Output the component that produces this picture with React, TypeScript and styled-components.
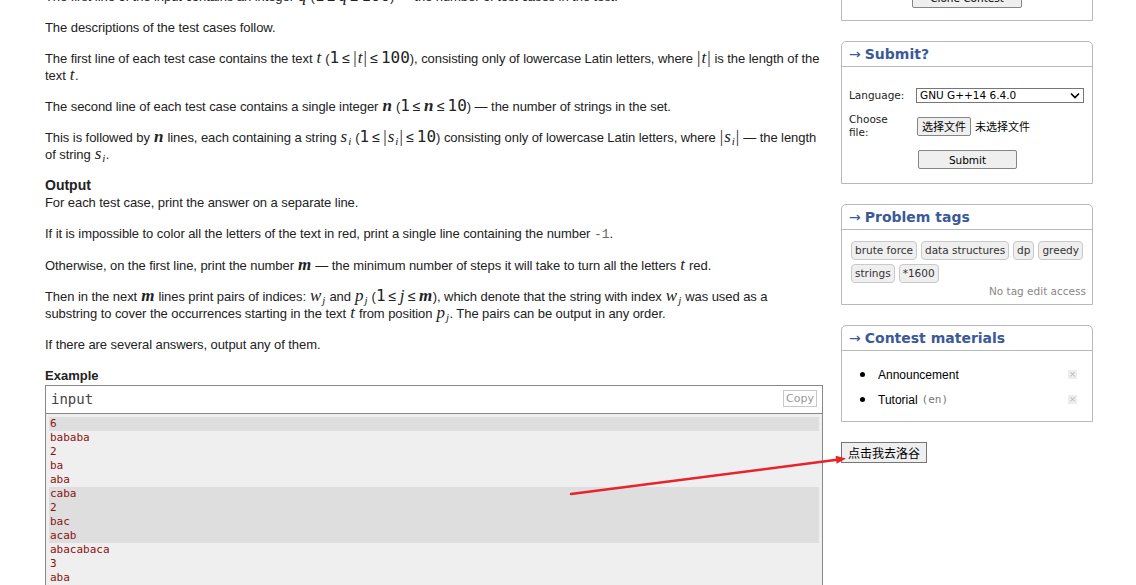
import React from 'react';
import styled, { createGlobalStyle } from 'styled-components';

const GlobalStyle = createGlobalStyle`
  html, body { margin: 0; padding: 0; background: #fff; }
  body { font-family: "Liberation Sans", Arial, sans-serif; overflow: hidden; }
`;

const Page = styled.div`
  position: relative;
  display: flex;
  align-items: flex-start;
  gap: 18px;
  padding-left: 45px;
  width: 1136px;
  height: 585px;
  overflow: hidden;
  box-sizing: border-box;
`;

const Main = styled.div`
  width: 778px;
  flex: none;
  margin-top: -12.5px;
  font-size: 13px;
  line-height: 17px;
  letter-spacing: -0.07px;
  color: #222;
`;

const Para = styled.p<{ $nowrap?: boolean }>`
  margin: 0 0 14px;
  white-space: ${(p) => (p.$nowrap ? 'nowrap' : 'normal')};
`;

const SectionTitle = styled.div<{ $size: number }>`
  font-weight: bold;
  font-size: ${(p) => p.$size}px;
  line-height: 17px;
  letter-spacing: 0;
  color: #222;
`;

const V = styled.span<{ $bold?: boolean }>`
  font-family: "Liberation Serif", "Times New Roman", serif;
  font-style: italic;
  font-size: 17px;
  line-height: 0;
  letter-spacing: 0;
  padding: 0 0.5px;
  font-weight: ${(p) => (p.$bold ? 'bold' : 'normal')};
`;

const Num = styled.span`
  font-family: "DejaVu Sans Mono", monospace;
  font-size: 16px;
  line-height: 0;
  letter-spacing: 0;
`;

const Rel = styled.span`
  font-family: "Liberation Sans", Arial, sans-serif;
  font-size: 14px;
  line-height: 0;
  margin: 0 3px;
`;

const Bar = styled.span`
  font-family: "Liberation Serif", serif;
  font-size: 17px;
  line-height: 0;
  margin: 0 0.5px;
`;

const Sub = styled.sub`
  font-family: "Liberation Serif", serif;
  font-style: italic;
  font-weight: normal;
  font-size: 11px;
  line-height: 0;
  vertical-align: -3px;
  padding-left: 1px;
`;

const Code = styled.span`
  font-family: "Liberation Mono", monospace;
  font-size: 13px;
  letter-spacing: 0;
  color: #666;
`;

const SampleBox = styled.div`
  margin-top: 1px;
  border: 1px solid #888;
  letter-spacing: 0;
`;

const SampleHeader = styled.div`
  height: 27px;
  border-bottom: 1px solid #888;
  display: flex;
  align-items: center;
  justify-content: space-between;
  padding: 0 5px;
  font-family: "DejaVu Sans Mono", monospace;
  font-size: 14px;
  color: #444;
`;

const CopyButton = styled.div`
  height: 15px;
  padding: 0 2px;
  border: 1px solid #c8c8c8;
  font-family: "DejaVu Sans", sans-serif;
  font-size: 11px;
  line-height: 15px;
  color: #999;
  margin-top: -1px;
`;

const SampleBody = styled.div`
  background: #efefef;
  padding: 3px 3px;
  font-family: "DejaVu Sans Mono", monospace;
  font-size: 11px;
  line-height: 14px;
  color: #8b1010;
`;

const SampleLine = styled.div<{ $dark: boolean }>`
  height: 14px;
  padding-left: 1px;
  background: ${(p) => (p.$dark ? '#dedede' : 'transparent')};
`;

const Side = styled.aside`
  width: 252px;
  flex: none;
  display: flex;
  flex-direction: column;
  align-items: flex-start;
  gap: 20px;
  margin-top: -30px;
  font-family: "DejaVu Sans", Verdana, sans-serif;
`;

const Box = styled.section`
  width: 252px;
  box-sizing: border-box;
  border: 1px solid #b9b9b9;
  border-radius: 5px 5px 0 0;
  background: #fff;
`;

const BoxHeader = styled.div`
  height: 24px;
  border-bottom: 1px solid #b9b9b9;
  padding-left: 7px;
  display: flex;
  align-items: center;
  gap: 4px;
  font-weight: bold;
  font-size: 14px;
  color: #3b5998;
`;

const Arrow = styled.span`
  font-weight: normal;
  font-size: 14px;
`;

const CloneBody = styled.div`
  height: 49px;
  box-sizing: border-box;
  padding-bottom: 12px;
  display: flex;
  align-items: flex-end;
  justify-content: center;
`;

const NativeButton = styled.button<{ $w?: number }>`
  height: 20px;
  box-sizing: border-box;
  width: ${(p) => (p.$w ? `${p.$w}px` : 'auto')};
  padding: 0 5px;
  background: #efefef;
  border: 1px solid #858585;
  border-radius: 2px;
  font-family: "DejaVu Sans", "Noto Sans CJK SC", sans-serif;
  font-size: 10.5px;
  color: #000;
  line-height: 18px;
`;

const FormGrid = styled.div`
  display: grid;
  grid-template-columns: 67px 1fr;
  grid-template-rows: 14px 26px 19px;
  row-gap: 11px;
  align-items: center;
  padding: 21px 8px 14px 7px;
  font-size: 10.5px;
  color: #222;
`;

const Label = styled.div`
  line-height: 13px;
`;

const SelectBox = styled.div`
  width: 168px;
  height: 15px;
  box-sizing: border-box;
  border: 1px solid #767676;
  display: flex;
  align-items: center;
  justify-content: space-between;
  padding: 0 3px 0 3px;
  font-size: 10.5px;
  color: #000;
  background: #fff;
`;

const FileRow = styled.div`
  display: flex;
  align-items: center;
  gap: 4px;
  margin-left: 1px;
  font-family: "Noto Sans CJK SC", sans-serif;
  font-size: 11px;
  color: #000;
`;

const FileButton = styled.div`
  height: 19px;
  box-sizing: border-box;
  padding: 0 4px;
  border: 1px solid #858585;
  border-radius: 2px;
  background: #efefef;
  display: flex;
  align-items: center;
  font-size: 11px;
`;

const SubmitCell = styled.div`
  grid-column: 2;
  padding-left: 2px;
`;

const SubmitButton = styled.div`
  width: 99px;
  height: 19px;
  box-sizing: border-box;
  border: 1px solid #858585;
  border-radius: 2px;
  background: #efefef;
  display: flex;
  align-items: center;
  justify-content: center;
  font-size: 10.5px;
  color: #000;
`;

const TagBody = styled.div`
  padding: 11px 6px 6px 9px;
`;

const TagList = styled.div`
  display: flex;
  flex-wrap: wrap;
  gap: 4px;
`;

const Tag = styled.span`
  height: 19px;
  box-sizing: border-box;
  padding: 0 3px;
  border: 1px solid #c9c9c9;
  border-radius: 4px;
  background: #efefef;
  font-size: 10.5px;
  line-height: 17px;
  color: #333;
`;

const NoAccess = styled.div`
  margin-top: 2px;
  text-align: right;
  font-size: 10.5px;
  line-height: 13px;
  color: #888;
`;

const MaterialList = styled.ul`
  list-style: none;
  margin: 0;
  padding: 11px 15px 9px 18px;
`;

const MaterialItem = styled.li`
  height: 25px;
  display: flex;
  align-items: center;
  font-family: "Liberation Sans", Arial, sans-serif;
  font-size: 12px;
  color: #000;
`;

const Bullet = styled.span`
  width: 5px;
  height: 5px;
  border-radius: 50%;
  background: #000;
  margin-right: 13px;
  flex: none;
`;

const Lang = styled.span`
  font-family: "DejaVu Sans Mono", monospace;
  font-size: 11px;
  color: #777;
  margin-left: 4px;
`;

const Spacer = styled.span`
  flex: 1;
`;

const CloseMark = styled.span`
  width: 9px;
  height: 9px;
  background: #eee;
  color: #bbb;
  font-size: 9px;
  line-height: 9px;
  text-align: center;
  font-family: "DejaVu Sans", sans-serif;
`;

const LuoguButton = styled.button`
  height: 21px;
  padding: 0 6px;
  background: #efefef;
  border: 1px solid #767676;
  border-radius: 0;
  font-family: "Noto Sans CJK SC", sans-serif;
  font-size: 12px;
  line-height: 19px;
  color: #000;
`;

const Overlay = styled.svg`
  position: absolute;
  left: 0;
  top: 0;
  pointer-events: none;
`;

const Ineq: React.FC<{ v: React.ReactNode; max: React.ReactNode; abs?: boolean }> = ({ v, max, abs }) => (
  <>
    <Num>1</Num>
    <Rel>≤</Rel>
    {abs && <Bar>|</Bar>}
    {v}
    {abs && <Bar>|</Bar>}
    <Rel>≤</Rel>
    {max}
  </>
);

const sample = [
  '6', 'bababa', '2', 'ba', 'aba', 'caba', '2', 'bac', 'acab', 'abacabaca', '3', 'aba', 'bac', 'aca',
  'baca', '3', 'a', 'c', 'b',
];
const groupOf = (i: number) => {
  if (i === 0) return 0;
  if (i <= 4) return 1;
  if (i <= 8) return 2;
  if (i <= 13) return 3;
  return 4;
};

export default function App() {
  return (
    <>
      <GlobalStyle />
      <Page>
        <Main>
          <Para>
            The first line of the input contains an integer <V>q</V> (<Ineq v={<V>q</V>} max={<Num>100</Num>} />) — the number of test cases in the test.
          </Para>
          <Para>The descriptions of the test cases follow.</Para>
          <Para $nowrap>
            The first line of each test case contains the text <V>t</V> (<Ineq abs v={<V>t</V>} max={<Num>100</Num>} />), consisting only of lowercase Latin letters, where <Bar>|</Bar><V>t</V><Bar>|</Bar> is the length of the
            <br />
            text <V>t</V>.
          </Para>
          <Para>
            The second line of each test case contains a single integer <V $bold>n</V> (<Ineq v={<V $bold>n</V>} max={<Num>10</Num>} />) — the number of strings in the set.
          </Para>
          <Para $nowrap>
            This is followed by <V $bold>n</V> lines, each containing a string <V>s<Sub>i</Sub></V> (<Ineq abs v={<V>s<Sub>i</Sub></V>} max={<Num>10</Num>} />) consisting only of lowercase Latin letters, where <Bar>|</Bar><V>s<Sub>i</Sub></V><Bar>|</Bar> — the length
            <br />
            of string <V>s<Sub>i</Sub></V>.
          </Para>
          <SectionTitle $size={14}>Output</SectionTitle>
          <Para>For each test case, print the answer on a separate line.</Para>
          <Para>
            If it is impossible to color all the letters of the text in red, print a single line containing the number <Code>-1</Code>.
          </Para>
          <Para>
            Otherwise, on the first line, print the number <V $bold>m</V> — the minimum number of steps it will take to turn all the letters <V>t</V> red.
          </Para>
          <Para $nowrap>
            Then in the next <V $bold>m</V> lines print pairs of indices: <V>w<Sub>j</Sub></V> and <V>p<Sub>j</Sub></V> (<Ineq v={<V>j</V>} max={<V $bold>m</V>} />), which denote that the string with index <V>w<Sub>j</Sub></V> was used as a
            <br />
            substring to cover the occurrences starting in the text <V>t</V> from position <V>p<Sub>j</Sub></V>. The pairs can be output in any order.
          </Para>
          <Para>If there are several answers, output any of them.</Para>
          <SectionTitle $size={13}>Example</SectionTitle>
          <SampleBox>
            <SampleHeader>
              <span>input</span>
              <CopyButton>Copy</CopyButton>
            </SampleHeader>
            <SampleBody>
              {sample.map((line, i) => (
                <SampleLine key={i} $dark={groupOf(i) % 2 === 0}>
                  {line}
                </SampleLine>
              ))}
            </SampleBody>
          </SampleBox>
        </Main>
        <Side>
          <Box>
            <CloneBody>
              <NativeButton $w={110}>Clone Contest</NativeButton>
            </CloneBody>
          </Box>
          <Box>
            <BoxHeader>
              <Arrow>→</Arrow>Submit?
            </BoxHeader>
            <FormGrid>
              <Label>Language:</Label>
              <SelectBox>
                <span>GNU G++14 6.4.0</span>
                <svg width="10" height="7" viewBox="0 0 10 7">
                  <path d="M1 1.5 L5 5.5 L9 1.5" fill="none" stroke="#000" strokeWidth="1.6" />
                </svg>
              </SelectBox>
              <Label>
                Choose
                <br />
                file:
              </Label>
              <FileRow>
                <FileButton>选择文件</FileButton>
                <span>未选择文件</span>
              </FileRow>
              <SubmitCell>
                <SubmitButton>Submit</SubmitButton>
              </SubmitCell>
            </FormGrid>
          </Box>
          <Box>
            <BoxHeader>
              <Arrow>→</Arrow>Problem tags
            </BoxHeader>
            <TagBody>
              <TagList>
                <Tag>brute force</Tag>
                <Tag>data structures</Tag>
                <Tag>dp</Tag>
                <Tag>greedy</Tag>
                <Tag>strings</Tag>
                <Tag>*1600</Tag>
              </TagList>
              <NoAccess>No tag edit access</NoAccess>
            </TagBody>
          </Box>
          <Box>
            <BoxHeader>
              <Arrow>→</Arrow>Contest materials
            </BoxHeader>
            <MaterialList>
              <MaterialItem>
                <Bullet />
                Announcement
                <Spacer />
                <CloseMark>×</CloseMark>
              </MaterialItem>
              <MaterialItem>
                <Bullet />
                Tutorial<Lang>(en)</Lang>
                <Spacer />
                <CloseMark>×</CloseMark>
              </MaterialItem>
            </MaterialList>
          </Box>
          <LuoguButton>点击我去洛谷</LuoguButton>
        </Side>
        <Overlay width="1136" height="585" viewBox="0 0 1136 585">
          <line x1="571" y1="494" x2="837" y2="459.8" stroke="#e8232c" strokeWidth="2.5" strokeLinecap="round" />
          <polygon points="846,458.5 836.6,463.8 835.6,455.8" fill="#e8232c" />
        </Overlay>
      </Page>
    </>
  );
}
